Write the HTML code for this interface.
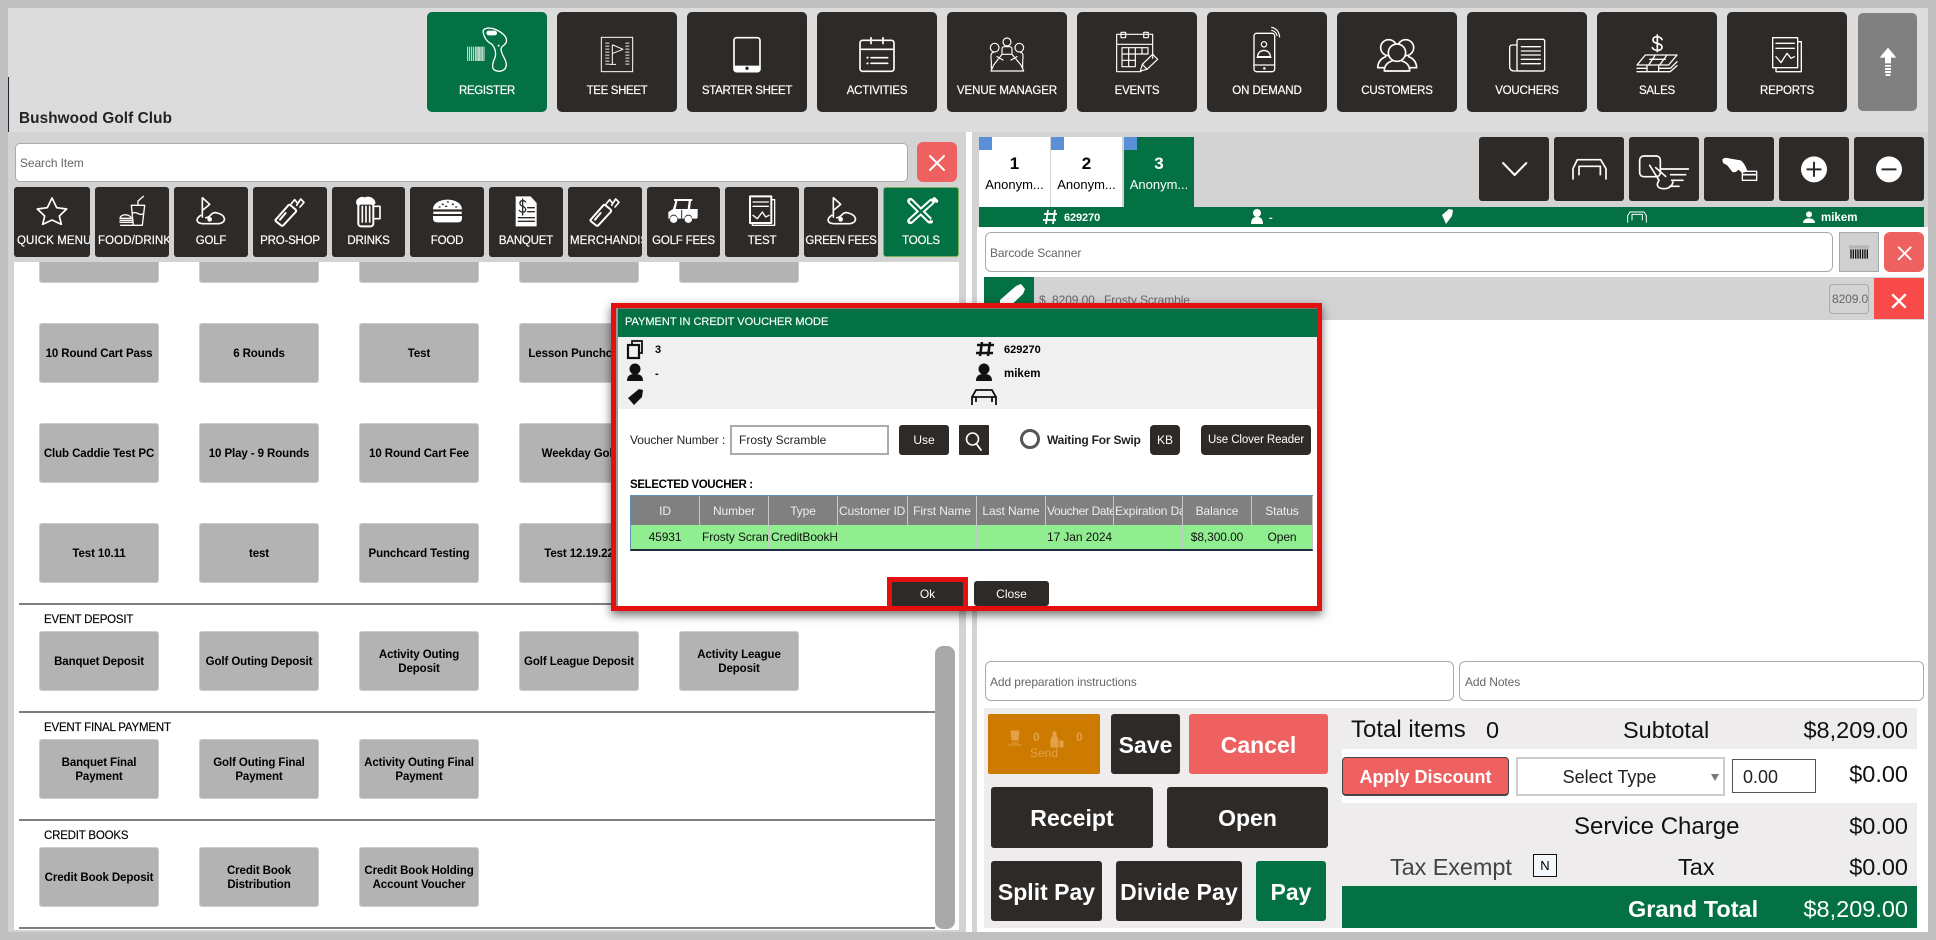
<!DOCTYPE html>
<html><head><meta charset="utf-8"><title>Register</title>
<style>
html,body{margin:0;padding:0}
body{width:1936px;height:940px;position:relative;overflow:hidden;background:#c0c0c0;font-family:"Liberation Sans",sans-serif;color:#000}
.a{position:absolute;box-sizing:border-box}
.c{position:absolute;box-sizing:border-box;display:flex;align-items:center;justify-content:center;text-align:center;overflow:hidden}
.t{position:absolute;white-space:nowrap;line-height:16px;height:16px}
.h{background:#2d2a28;color:#fff;border-radius:5px;top:12px;width:120px;height:100px;font-size:11.5px;letter-spacing:-.2px;padding-top:58px;font-weight:400;-webkit-text-stroke:.2px #fff}
.k{background:#2d2a28;color:#fff;border-radius:3px;top:187px;height:70px;font-size:11.5px;letter-spacing:-.2px;padding-top:38px;white-space:nowrap;-webkit-text-stroke:.2px #fff}
.k.l{justify-content:flex-start;padding-left:3px;letter-spacing:.1px}
.i{background:#b3b3b3;border:1px solid #ccc;border-radius:3px;width:120px;height:60px;font-weight:700;font-size:11.5px;letter-spacing:-.1px;line-height:14px;padding:1px 1px 0}
.d{left:19px;width:916px;height:2px;background:#7f7f7f}
.lb{left:44px;font-size:11.5px;letter-spacing:-.2px;-webkit-text-stroke:.15px #000}
.tb{background:#2d2a28;border-radius:3px;top:137px;height:64px;width:70px}
.big{background:#2d2a28;color:#fff;font-weight:700;font-size:23px;border-radius:3px;padding-top:2px}
.in{background:#fff;border:1px solid #aaa;border-radius:6px}
.ph{color:#666;font-size:12px;letter-spacing:-.1px}
.tot{font-size:23.5px;line-height:28px;height:28px;color:#111}
.r{right:28px}
.mb{background:#2d2a28;color:#fff;font-size:12px;border-radius:3px}
.th,.td{position:absolute;box-sizing:border-box;top:0;height:100%;display:flex;align-items:center;justify-content:center;font-size:12px;overflow:hidden;white-space:nowrap;border-right:1px solid #c8c8c8;letter-spacing:-.1px}
.th{color:#eee}
.td{color:#111}
.lf{justify-content:flex-start;padding-left:1px}
svg{position:absolute;left:0;top:0;pointer-events:none}
</style></head><body>

<!-- header -->
<div class="a" style="left:8px;top:8px;width:1920px;height:124px;background:#dcdcdc"></div>
<div class="a" style="left:8px;top:77px;width:1px;height:58px;background:#223"></div>
<div class="t" style="left:19px;top:111px;font-weight:700;font-size:15.3px;color:#222;letter-spacing:.1px">Bushwood Golf Club</div>

<div class="c h" style="left:427px;background:#037144;letter-spacing:-.35px">REGISTER</div>
<div class="c h" style="left:557px;letter-spacing:-.35px">TEE SHEET</div>
<div class="c h" style="left:687px;letter-spacing:-.3px">STARTER SHEET</div>
<div class="c h" style="left:817px">ACTIVITIES</div>
<div class="c h" style="left:947px;letter-spacing:-.05px">VENUE MANAGER</div>
<div class="c h" style="left:1077px">EVENTS</div>
<div class="c h" style="left:1207px;letter-spacing:-.1px">ON DEMAND</div>
<div class="c h" style="left:1337px">CUSTOMERS</div>
<div class="c h" style="left:1467px">VOUCHERS</div>
<div class="c h" style="left:1597px">SALES</div>
<div class="c h" style="left:1727px">REPORTS</div>
<div class="a" style="left:1858px;top:13px;width:59px;height:98px;background:#808080;border-radius:5px"></div>

<!-- left panel -->
<div class="a" style="left:8px;top:132px;width:958px;height:800px;background:#d3d3d3"></div>
<div class="a in" style="left:15px;top:143px;width:893px;height:39px;border-radius:5px"></div>
<div class="t ph" style="left:20px;top:155px">Search Item</div>
<div class="c" style="left:917px;top:142px;width:40px;height:40px;background:#ef6060;border-radius:6px"></div>

<div class="c k l" style="left:14px;width:76px;padding-right:2px">QUICK MENU</div>
<div class="c k l" style="left:95px;width:74px;padding-right:2px">FOOD/DRINK</div>
<div class="c k" style="left:174px;width:74px">GOLF</div>
<div class="c k" style="left:253px;width:74px">PRO-SHOP</div>
<div class="c k" style="left:332px;width:73px">DRINKS</div>
<div class="c k" style="left:410px;width:74px">FOOD</div>
<div class="c k" style="left:489px;width:74px">BANQUET</div>
<div class="c k l" style="left:568px;width:74px;padding-left:2px;padding-right:1px">MERCHANDISE</div>
<div class="c k" style="left:647px;width:73px">GOLF FEES</div>
<div class="c k" style="left:725px;width:74px">TEST</div>
<div class="c k" style="left:804px;width:74px;letter-spacing:-.3px">GREEN FEES</div>
<div class="c k" style="left:883px;width:76px;background:#037144;border:1px solid #7cb060">TOOLS</div>

<div class="a" style="left:14px;top:262px;width:945px;height:668px;background:#fff;overflow:hidden">
  <div class="a" style="left:25px;top:-10px;width:120px;height:31px;background:#b3b3b3;border:1px solid #ccc;border-radius:3px"></div>
  <div class="a" style="left:185px;top:-10px;width:120px;height:31px;background:#b3b3b3;border:1px solid #ccc;border-radius:3px"></div>
  <div class="a" style="left:345px;top:-10px;width:120px;height:31px;background:#b3b3b3;border:1px solid #ccc;border-radius:3px"></div>
  <div class="a" style="left:505px;top:-10px;width:120px;height:31px;background:#b3b3b3;border:1px solid #ccc;border-radius:3px"></div>
  <div class="a" style="left:665px;top:-10px;width:120px;height:31px;background:#b3b3b3;border:1px solid #ccc;border-radius:3px"></div>
</div>

<div class="c i" style="left:39px;top:323px">10 Round Cart Pass</div>
<div class="c i" style="left:199px;top:323px">6 Rounds</div>
<div class="c i" style="left:359px;top:323px">Test</div>
<div class="c i" style="left:519px;top:323px">Lesson Punchcard</div>
<div class="c i" style="left:39px;top:423px">Club Caddie Test PC</div>
<div class="c i" style="left:199px;top:423px">10 Play - 9 Rounds</div>
<div class="c i" style="left:359px;top:423px">10 Round Cart Fee</div>
<div class="c i" style="left:519px;top:423px">Weekday Golf</div>
<div class="c i" style="left:39px;top:523px">Test 10.11</div>
<div class="c i" style="left:199px;top:523px">test</div>
<div class="c i" style="left:359px;top:523px">Punchcard Testing</div>
<div class="c i" style="left:519px;top:523px">Test 12.19.22</div>

<div class="a d" style="top:603px"></div>
<div class="t lb" style="top:612px">EVENT DEPOSIT</div>
<div class="c i" style="left:39px;top:631px">Banquet Deposit</div>
<div class="c i" style="left:199px;top:631px">Golf Outing Deposit</div>
<div class="c i" style="left:359px;top:631px">Activity Outing<br>Deposit</div>
<div class="c i" style="left:519px;top:631px">Golf League Deposit</div>
<div class="c i" style="left:679px;top:631px">Activity League<br>Deposit</div>

<div class="a d" style="top:711px"></div>
<div class="t lb" style="top:720px">EVENT FINAL PAYMENT</div>
<div class="c i" style="left:39px;top:739px">Banquet Final<br>Payment</div>
<div class="c i" style="left:199px;top:739px">Golf Outing Final<br>Payment</div>
<div class="c i" style="left:359px;top:739px">Activity Outing Final<br>Payment</div>

<div class="a d" style="top:819px"></div>
<div class="t lb" style="top:828px">CREDIT BOOKS</div>
<div class="c i" style="left:39px;top:847px">Credit Book Deposit</div>
<div class="c i" style="left:199px;top:847px">Credit Book<br>Distribution</div>
<div class="c i" style="left:359px;top:847px">Credit Book Holding<br>Account Voucher</div>

<div class="a d" style="top:927px"></div>
<div class="a" style="left:935px;top:646px;width:20px;height:283px;background:#a9a9a9;border-radius:8px"></div>

<!-- right panel -->
<div class="a" style="left:966px;top:132px;width:6px;height:800px;background:#fff"></div>
<div class="a" style="left:972px;top:132px;width:956px;height:800px;background:#d3d3d3"></div>
<div class="a" style="left:977px;top:227px;width:951px;height:705px;background:#fff"></div>

<div class="a" style="left:979px;top:137px;width:71px;height:70px;background:#fff"></div>
<div class="a" style="left:1051px;top:137px;width:71px;height:70px;background:#fff"></div>
<div class="a" style="left:1124px;top:137px;width:70px;height:70px;background:#037144"></div>
<div class="a" style="left:979px;top:137px;width:13px;height:13px;background:#5b90d8"></div>
<div class="a" style="left:1051px;top:137px;width:13px;height:13px;background:#5b90d8"></div>
<div class="a" style="left:1124px;top:137px;width:13px;height:13px;background:#5b90d8"></div>
<div class="t" style="left:979px;width:71px;text-align:center;top:155px;font-size:17px;font-weight:700;line-height:18px;height:18px">1</div>
<div class="t" style="left:1051px;width:71px;text-align:center;top:155px;font-size:17px;font-weight:700;line-height:18px;height:18px">2</div>
<div class="t" style="left:1124px;width:70px;text-align:center;top:155px;font-size:17px;font-weight:700;color:#fff;line-height:18px;height:18px">3</div>
<div class="t" style="left:979px;width:71px;text-align:center;top:177px;font-size:13px">Anonym...</div>
<div class="t" style="left:1051px;width:71px;text-align:center;top:177px;font-size:13px">Anonym...</div>
<div class="t" style="left:1124px;width:70px;text-align:center;top:177px;font-size:13px;color:#fff">Anonym...</div>

<div class="a tb" style="left:1479px"></div>
<div class="a tb" style="left:1554px"></div>
<div class="a tb" style="left:1629px"></div>
<div class="a tb" style="left:1704px"></div>
<div class="a tb" style="left:1779px"></div>
<div class="a tb" style="left:1854px"></div>

<div class="a" style="left:979px;top:207px;width:945px;height:20px;background:#037144"></div>
<div class="t" style="left:1064px;top:210px;color:#fff;font-size:11px;font-weight:700;letter-spacing:-.1px">629270</div>
<div class="t" style="left:1269px;top:210px;color:#fff;font-size:11px;font-weight:700">-</div>
<div class="t" style="left:1821px;top:210px;color:#fff;font-size:11.5px;font-weight:700">mikem</div>

<div class="a in" style="left:985px;top:232px;width:848px;height:40px"></div>
<div class="t ph" style="left:990px;top:245px">Barcode Scanner</div>
<div class="a" style="left:1839px;top:232px;width:40px;height:40px;background:#d0d0d0;border:1px solid #aaa"></div>
<div class="a" style="left:1884px;top:232px;width:40px;height:40px;background:#ef6060;border-radius:6px"></div>

<div class="a" style="left:984px;top:277px;width:940px;height:43px;background:#d3d3d3"></div>
<div class="a" style="left:984px;top:277px;width:50px;height:43px;background:#037144"></div>
<div class="t ph" style="left:1039px;top:292px">$&nbsp; 8209.00</div>
<div class="t ph" style="left:1104px;top:292px">Frosty Scramble</div>
<div class="c ph" style="left:1829px;top:284px;width:40px;height:30px;background:#d3d3d3;border:1px solid #aaa;border-radius:4px;justify-content:flex-start;padding-left:2px;white-space:nowrap">8209.00</div>
<div class="a" style="left:1874px;top:278px;width:50px;height:41px;background:#f94a4a"></div>

<div class="a in" style="left:985px;top:661px;width:469px;height:40px"></div>
<div class="t ph" style="left:990px;top:674px">Add preparation instructions</div>
<div class="a in" style="left:1459px;top:661px;width:465px;height:40px"></div>
<div class="t ph" style="left:1465px;top:674px">Add Notes</div>

<!-- bottom -->
<div class="a" style="left:984px;top:708px;width:933px;height:220px;background:#efecee"></div>
<div class="c" style="left:988px;top:714px;width:112px;height:60px;background:#cc7a00;border-radius:2px"></div>
<div class="t" style="left:1033px;top:729px;color:#e3a14a;font-size:12px;font-weight:700">0</div>
<div class="t" style="left:1076px;top:729px;color:#e3a14a;font-size:12px;font-weight:700">0</div>
<div class="t" style="left:988px;width:112px;text-align:center;top:745px;color:#e3a14a;font-size:12px">Send</div>
<div class="c big" style="left:1111px;top:714px;width:69px;height:60px">Save</div>
<div class="c big" style="left:1189px;top:714px;width:139px;height:60px;background:#ef6060">Cancel</div>
<div class="c big" style="left:991px;top:787px;width:162px;height:61px;letter-spacing:.05px">Receipt</div>
<div class="c big" style="left:1167px;top:787px;width:161px;height:61px">Open</div>
<div class="c big" style="left:991px;top:861px;width:111px;height:60px">Split Pay</div>
<div class="c big" style="left:1116px;top:861px;width:126px;height:60px;letter-spacing:.15px">Divide Pay</div>
<div class="c big" style="left:1256px;top:861px;width:70px;height:60px;background:#037144">Pay</div>

<div class="a" style="left:1342px;top:749px;width:575px;height:54px;background:#fff"></div>
<div class="a" style="left:1342px;top:886px;width:575px;height:42px;background:#037144"></div>
<div class="t tot" style="left:1351px;top:716px;font-size:24px">Total items</div>
<div class="t tot" style="left:1486px;top:716px">0</div>
<div class="t tot" style="left:1623px;top:716px">Subtotal</div>
<div class="t tot r" style="top:716px">$8,209.00</div>
<div class="c" style="left:1342px;top:757px;width:167px;height:39px;background:#ef6060;border:1px solid #444;border-bottom-width:2px;border-radius:4px;color:#fff;font-weight:700;font-size:18px;padding-top:2px">Apply Discount</div>
<div class="c" style="left:1516px;top:757px;width:209px;height:39px;background:#fff;border:2px solid #ccc;font-size:18px;padding:2px 22px 0 0;color:#222">Select Type</div>
<div class="a" style="left:1711px;top:774px;width:0;height:0;border-left:4px solid transparent;border-right:4px solid transparent;border-top:7px solid #777"></div>
<div class="a" style="left:1732px;top:759px;width:84px;height:34px;background:#fff;border:1px solid #555"></div>
<div class="t" style="left:1743px;top:766px;font-size:18px;line-height:22px;height:22px;color:#222">0.00</div>
<div class="t tot r" style="top:760px">$0.00</div>
<div class="t tot" style="left:1574px;top:813px;font-size:24px">Service Charge</div>
<div class="t tot r" style="top:812px">$0.00</div>
<div class="t tot" style="left:1390px;top:853px;color:#444;letter-spacing:-.1px">Tax Exempt</div>
<div class="c" style="left:1533px;top:854px;width:24px;height:23px;background:#f4f8fc;border:1.5px solid #111;font-size:13px">N</div>
<div class="t tot" style="left:1678px;top:853px">Tax</div>
<div class="t tot r" style="top:853px">$0.00</div>
<div class="t tot" style="left:1628px;top:895px;color:#fff;font-weight:700">Grand Total</div>
<div class="t tot r" style="top:895px;color:#fff">$8,209.00</div>

<!-- main icons -->
<svg width="1936" height="940" viewBox="0 0 1936 940" fill="none" stroke="#fff" stroke-linecap="round" stroke-linejoin="round">
<g transform="translate(427 15) scale(.33333)" stroke-width="4">
  <path d="M168 50C170 36 195 36 215 48C232 58 241 68 238 80C236 92 224 90 222 102C224 125 238 130 238 150C236 170 214 172 202 165C192 158 198 140 205 125C208 105 200 95 195 88C180 80 172 70 168 50Z"/>
  <rect x="178" y="47" width="32" height="14" rx="7" fill="#fff" stroke="none"/><circle cx="215" cy="92" r="3" fill="#fff" stroke="none"/>
  <path stroke-linecap="butt" stroke-width="3" d="M122 95V138M128 95V138M134 95V138M140 95V138M146 95V138M150 95V138M154 95V138M158 95V138M162 95V138M166 95V138M171 95V138" opacity=".85"/>
  <rect x="523" y="67" width="94" height="103" stroke-width="3" stroke-linejoin="miter"/>
  <path stroke-linecap="butt" stroke-width="12" stroke-dasharray="3 6" d="M541 83V155M601 83V155" opacity=".9"/>
  <path stroke-width="3" d="M556 90V148M548 148H566M558 90L588 103L558 115"/>
  <rect x="921" y="68" width="78" height="102" rx="8" stroke-width="5"/><rect x="921" y="152" width="78" height="18" rx="5" fill="#fff" stroke="none"/><circle cx="960" cy="160" r="5" fill="#2d2a28" stroke="none"/>
  <rect x="1299" y="76" width="102" height="93" rx="8" stroke-width="5"/><path stroke-width="5" d="M1299 103H1401M1332 68V86M1368 68V86M1332 128H1382M1332 145H1382"/><path stroke-width="6" d="M1321 128h1M1321 145h1"/>
</g>
<g transform="translate(947 15) scale(.33333)" stroke-width="3.5">
  <circle cx="180" cy="81" r="12"/><circle cx="143" cy="98" r="13"/><circle cx="217" cy="98" r="13"/>
  <path d="M165 115V103Q165 95 172 95H188Q195 95 195 103V115M132 132V122Q132 113 140 112M228 132V122Q228 113 220 112M132 168H230L222 150L195 118H165L140 150ZM150 125L168 135M210 125L192 135M133 135V160M227 135V160"/>
  <path d="M582 170H509V58H617V130M509 88H617M525 98H603V117H525ZM545 98V155M565 98V155M585 98V117M525 117V155H565M525 136H565"/>
  <rect x="522" y="52" width="14" height="16" rx="1"/><rect x="590" y="52" width="14" height="16" rx="1"/>
  <path d="M580 168L586 148L617 118L632 133L600 163ZM586 148L600 163"/>
  <rect x="921" y="55" width="62" height="115" rx="8" stroke-width="4"/><path stroke-width="4" d="M921 150H983M932 125C932 100 970 100 970 125ZM930 127H972"/><circle cx="951" cy="88" r="8"/><circle cx="952" cy="160" r="2" fill="#fff"/>
  <path d="M974 46C983 48 988 54 990 62M974 37C988 40 996 50 998 66" stroke-width="3.5"/>
  <g stroke-width="5"><circle cx="1325" cy="98" r="24"/><circle cx="1376" cy="98" r="24"/>
  <path d="M1292 158C1293 140 1303 130 1316 125M1292 158H1312M1409 158C1408 140 1398 130 1385 125M1409 158H1388"/>
  <circle cx="1350" cy="113" r="26" fill="#2d2a28"/><path d="M1312 168C1312 150 1322 142 1335 138M1365 138C1378 142 1388 150 1388 168H1312"/></g>
</g>
<g transform="translate(1467 15) scale(.33333)" stroke-width="4">
  <rect x="150" y="73" width="83" height="95" rx="5"/><path d="M150 90H136Q128 90 128 98V155Q128 168 142 168H225M163 95H220M163 108H220M163 120H220M163 133H220M163 146H220"/>
  <path stroke-width="5" d="M585 74C580 62 558 62 558 75C558 88 585 83 585 96C585 110 560 108 556 98M571 60V110"/>
  <path d="M535 120H630L605 150H510ZM565 120L545 150M600 120L578 150M510 160H540M575 160H610L630 140M510 170H540M575 170H610L630 152M540 150V170H575V150M548 133H595"/>
  <rect x="917" y="68" width="75" height="90"/><path d="M992 80H1003V170H927V158M927 85H982M927 100H982M927 125L942 143L960 115L972 130L982 125"/>
  <path fill="#fff" stroke="none" d="M1263 98L1288 128H1272V145H1254V128H1238ZM1254 150H1272V155H1254ZM1254 159H1272V165H1254ZM1254 168H1272V174H1254ZM1256 177H1270V183H1256Z"/>
</g>
<g transform="translate(14 187) scale(.33333)" stroke-width="5">
  <path d="M114 33L128 62L158 66L136 87L142 112L114 99L86 112L92 87L70 66L100 62Z"/>
  <path stroke-width="4" d="M352 55H392L385 115H358ZM372 55V42L388 28M356 78C370 72 375 88 388 80M318 94C320 80 348 80 352 94ZM318 100H355M318 106H355M320 115H356"/>
  <path stroke-width="5" d="M565 90V32L587 52L568 68M560 85C545 95 545 108 565 110H615C640 105 635 85 610 78C590 72 592 92 575 92"/><circle cx="587" cy="97" r="7" fill="#fff" stroke="none"/>
  <path stroke-width="6" d="M785 98L823 55Q826 52 830 55L845 68Q848 71 845 75L808 115Q805 118 801 115L786 103Q783 100 785 98ZM798 98L815 78"/><path stroke-width="5" d="M832 50L842 38L850 48M848 55L860 36L870 46L858 60"/>
  <rect x="1033" y="50" width="45" height="68" rx="8" stroke-width="6"/><path stroke-width="5" d="M1078 58H1098V95H1078M1045 58V105M1056 58V105M1067 58V105"/><path fill="#fff" stroke="none" d="M1028 52C1020 35 1045 25 1052 32C1060 25 1080 30 1084 45C1086 55 1075 55 1072 48C1060 52 1045 45 1040 50C1038 58 1030 58 1028 52Z"/>
  <path fill="#fff" stroke="none" d="M1257 67C1258 28 1343 28 1344 67ZM1258 74H1343V81H1258ZM1257 87H1344V94Q1344 106 1332 106H1270Q1257 106 1257 94Z"/><path stroke="#2d2a28" stroke-width="4" d="M1285 52h3M1300 45h3M1315 52h3M1295 58h3M1325 60h3M1275 60h3"/>
</g>
<g transform="translate(489 187) scale(.33333)" stroke-width="5">
  <path fill="#fff" stroke="none" d="M80 28H125L143 48V118H80Z"/><path stroke="#2d2a28" stroke-width="4" d="M110 45C104 38 92 40 93 50C94 60 110 56 110 68C110 78 96 78 91 70M101 36V84M116 62H136M116 74H136M88 92H136M88 103H136"/>
  <path stroke-width="6" d="M305 98L343 55Q346 52 350 55L365 68Q368 71 365 75L328 115Q325 118 321 115L306 103Q303 100 305 98ZM318 98L335 78"/><path stroke-width="5" d="M352 50L362 38L370 48M368 55L380 36L390 46L378 60"/>
  <path fill="#fff" stroke="none" d="M555 36H610V42H606L603 66H626V90Q626 95 620 95H610A12 12 0 0 0 586 95H566A12 12 0 0 0 542 95H538V75L552 66L559 42H555ZM565 42L560 66H596L599 42Z"/><circle cx="554" cy="97" r="11" fill="#fff" stroke="none"/><circle cx="598" cy="97" r="11" fill="#fff" stroke="none"/><path stroke="#2d2a28" stroke-width="3" d="M578 70V95"/>
  <rect x="783" y="28" width="64" height="80" stroke-width="6"/><path stroke-width="4" d="M850 38H857V115H790V110M792 45H838M792 58H838M792 85L805 95L820 75L830 90L840 85"/>
  <path stroke-width="5" d="M1033 90V32L1055 52L1036 68M1028 85C1013 95 1013 108 1033 110H1083C1108 105 1103 85 1078 78C1058 72 1060 92 1043 92"/><circle cx="1055" cy="97" r="7" fill="#fff" stroke="none"/>
  <path stroke-width="19" stroke-linecap="round" d="M1264 42L1322 100M1328 44L1264 102"/>
  <path stroke-width="11" stroke-linecap="round" d="M1322 100L1326 104M1336 36L1342 42"/>
  <path stroke="#037144" stroke-width="7" stroke-linecap="round" d="M1266 44L1320 98M1326 46L1266 100"/>
  <path stroke="#037144" stroke-width="5" stroke-linecap="butt" d="M1334 92L1326 100"/>
</g>
<g transform="translate(1479 137) scale(.33333)">
  <path stroke-width="6" d="M72 78L107 114L142 78"/>
  <path stroke-width="5" stroke-linecap="butt" d="M282 128V95L295 68H365L381 95V128M300 115V88H364V115"/>
  <rect x="482" y="57" width="62" height="62" rx="12" stroke-width="5"/>
  <path stroke-width="5" d="M512 85L540 130C528 148 540 155 555 155C572 155 580 145 582 135M530 92L560 118M545 96H628M575 113H620M578 130H612M572 148H600"/>
  <path fill="#fff" stroke="none" d="M730 68Q735 60 750 64L785 70Q795 75 806 103L790 108L778 98Q772 108 760 105L745 85L732 78Z"/>
  <rect x="790" y="103" width="43" height="27" stroke-width="4"/><path stroke-width="5" stroke-linecap="butt" d="M790 113H833"/>
  <circle cx="1005" cy="97" r="39" fill="#fff" stroke="none"/><path stroke="#2d2a28" stroke-width="6" d="M985 97H1025M1005 77V117"/>
  <circle cx="1230" cy="97" r="39" fill="#fff" stroke="none"/><path stroke="#2d2a28" stroke-width="6" d="M1210 97H1250"/>
  <path stroke-width="3" stroke-linecap="butt" d="M446 257V236L453 225H495L502 236V257M459 250V232H490V250"/>
  <circle cx="990" cy="232" r="9" fill="#fff" stroke="none"/><path fill="#fff" stroke="none" d="M972 258C972 246 984 244 990 244C996 244 1008 246 1008 258Z"/>
  <path stroke="#b5b5b5" stroke-width="10" stroke-linecap="butt" d="M1110 330H1170"/>
  <path stroke="#111" stroke-dasharray="4 3" stroke-linecap="butt" d="M1114 351H1168" style="stroke-width:28"/>
  <path stroke-width="5.5" d="M1259 331L1295 367M1295 331L1259 367"/>
</g>
<!-- page-coord icons -->
<g stroke-width="2">
  <path d="M930 156L944 170M944 156L930 170"/>
  <path stroke-width="2.4" d="M1893 295L1905 307M1905 295L1893 307"/>
  <path fill="#fff" stroke="none" d="M1000 300L1016 286L1021 284L1025 289L1023 294L1008 308L1000 308Z"/>
  <!-- green bar -->
  <path stroke-width="1.8" stroke-linecap="butt" d="M1048 210L1046 224M1055 210L1053 224M1044 214H1057M1043 220H1056"/>
  <circle cx="1257" cy="213" r="4" fill="#fff" stroke="none"/><path fill="#fff" stroke="none" d="M1251 224C1251 218 1254 217 1257 217C1260 217 1263 218 1263 224Z"/>
  <path fill="#fff" stroke="none" d="M1442 215L1449 209L1453 210L1452 216L1446 224Z"/>
  <!-- send icons -->
  <g stroke="#e3a14a" fill="#e3a14a" stroke-width="1"><path d="M1011 731H1019L1018 740H1012ZM1012 743H1018M1009 745H1021"/><path d="M1053 732H1056V736L1058 739V747H1051V739L1053 736ZM1060 741H1063V747H1060Z"/></g>
</g>
</svg>

<!-- modal -->
<div class="a" style="left:611px;top:303px;width:711px;height:308px;border:5.5px solid #e31010;background:#fff;box-shadow:0 4px 9px rgba(0,0,0,.55)">
  <div class="a" style="left:0;top:0;width:2px;height:100%;background:#999"></div>
  <div class="a" style="left:2px;top:0;right:0;height:29px;background:#037144;border-top:1px solid #777"></div>
  <div class="t" style="left:9px;top:6px;color:#fff;font-size:11px;letter-spacing:0;-webkit-text-stroke:.15px #fff">PAYMENT IN CREDIT VOUCHER MODE</div>
  <div class="a" style="left:2px;top:29px;right:0;height:72px;background:#f0f0f0"></div>
</div>
<div class="t" style="left:655px;top:342px;font-size:11px;font-weight:700">3</div>
<div class="t" style="left:655px;top:366px;font-size:11px;font-weight:700">-</div>
<div class="t" style="left:1004px;top:342px;font-size:11px;font-weight:700">629270</div>
<div class="t" style="left:1004px;top:366px;font-size:11.5px;font-weight:700">mikem</div>

<div class="t" style="left:630px;top:432px;font-size:12px;letter-spacing:-.1px;color:#222">Voucher Number :</div>
<div class="a" style="left:730px;top:425px;width:159px;height:30px;border:2px solid #aaa;background:#fff"></div>
<div class="t" style="left:739px;top:432px;font-size:12px;color:#222">Frosty Scramble</div>
<div class="c mb" style="left:899px;top:425px;width:50px;height:30px">Use</div>
<div class="a" style="left:959px;top:425px;width:30px;height:30px;background:#2d2a28;border-radius:1px"></div>
<div class="a" style="left:1020px;top:429px;width:20px;height:20px;border:3.5px solid #555;border-radius:50%;background:#fff"></div>
<div class="t" style="left:1047px;top:432px;font-size:12px;font-weight:700;letter-spacing:-.2px;color:#222">Waiting For Swip</div>
<div class="c mb" style="left:1150px;top:425px;width:30px;height:30px;border-radius:4px">KB</div>
<div class="c mb" style="left:1201px;top:425px;width:110px;height:30px;border-radius:4px;font-size:11.5px;letter-spacing:-.1px;white-space:nowrap">Use Clover Reader</div>
<div class="t" style="left:630px;top:477px;font-size:11.5px;font-weight:700;letter-spacing:-.35px">SELECTED VOUCHER :</div>

<div class="a" style="left:630px;top:495px;width:683px;height:30px;background:#808080;border:1px solid #5b8fb5;border-bottom:0">
  <div class="th" style="left:0;width:69px">ID</div>
  <div class="th" style="left:69px;width:69px">Number</div>
  <div class="th" style="left:138px;width:69px">Type</div>
  <div class="th lf" style="left:207px;width:70px">Customer ID</div>
  <div class="th" style="left:277px;width:69px">First Name</div>
  <div class="th" style="left:346px;width:69px">Last Name</div>
  <div class="th lf" style="left:415px;width:68px;letter-spacing:-.35px">Voucher Date</div>
  <div class="th lf" style="left:483px;width:69px">Expiration Date</div>
  <div class="th" style="left:552px;width:69px">Balance</div>
  <div class="th" style="left:621px;width:61px">Status</div>
</div>
<div class="a" style="left:630px;top:525px;width:683px;height:26px;background:#90ee90;border:1px solid #5b8fb5;border-top:0;border-bottom:2px solid #1f2f40">
  <div class="td" style="left:0;width:69px">45931</div>
  <div class="td lf" style="left:69px;width:69px;padding-left:2px">Frosty Scramble</div>
  <div class="td lf" style="left:138px;width:69px;padding-left:2px">CreditBookHolding</div>
  <div class="td" style="left:207px;width:70px"></div>
  <div class="td" style="left:277px;width:69px"></div>
  <div class="td" style="left:346px;width:69px"></div>
  <div class="td" style="left:415px;width:68px">17 Jan 2024</div>
  <div class="td" style="left:483px;width:69px"></div>
  <div class="td" style="left:552px;width:69px">$8,300.00</div>
  <div class="td" style="left:621px;width:61px">Open</div>
</div>

<div class="c mb" style="left:887px;top:577px;width:81px;height:34px;border:5px solid #e31010;border-radius:0">Ok</div>
<div class="c mb" style="left:974px;top:581px;width:75px;height:25px">Close</div>

<svg width="1936" height="940" viewBox="0 0 1936 940" fill="none" stroke="#111" stroke-linecap="butt">
  <rect x="632" y="341" width="10" height="12" stroke-width="1.8"/><rect x="628" y="345" width="11" height="13" fill="#f0f0f0" stroke-width="2.2"/>
  <circle cx="635" cy="369" r="5.5" fill="#111" stroke="none"/><path fill="#111" stroke="none" d="M627 381C627 375 631 374 635 374C639 374 643 375 643 381Z"/>
  <path fill="#111" stroke="none" d="M628 398L639 389L643 390L642 397L634 405Z"/>
  <path stroke-width="2.5" d="M982 342L980 356M990 342L988 356M977 345H994M976 353H993"/>
  <circle cx="984" cy="369" r="5.5" fill="#111" stroke="none"/><path fill="#111" stroke="none" d="M976 381C976 375 980 374 984 374C988 374 992 375 992 381Z"/>
  <path stroke-width="1.8" d="M972 405V397L976 390H992L996 397V405M972 397H996M976 397V402M992 397V402"/>
  <circle cx="972.5" cy="439" r="6" stroke="#fff" stroke-width="1.6"/><path stroke="#fff" stroke-width="1.8" stroke-linecap="round" d="M976.5 444L981 450"/>
</svg>
</body></html>
